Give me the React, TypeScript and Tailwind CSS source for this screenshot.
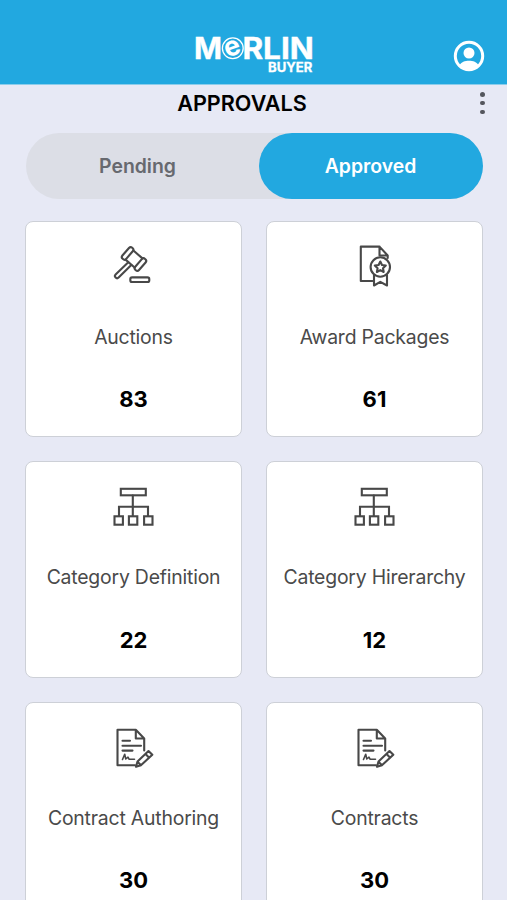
import React, { useState } from "react";

type IconProps = { className?: string };

const lineIcon = {
  viewBox: "0 0 70 60",
  width: 70,
  height: 60,
  fill: "none",
  stroke: "#484848",
  strokeWidth: 2.1,
  strokeLinejoin: "round" as const,
  strokeLinecap: "round" as const,
};

function GavelIcon({ className }: IconProps) {
  return (
    <svg {...lineIcon} className={className}>
      <g transform="translate(34 24) rotate(41)">
        <path d="M-6 -6H6M-6 6H6" />
        <rect x="-11" y="-7.3" width="5" height="14.6" rx="2.3" />
        <rect x="6" y="-7.3" width="5" height="14.6" rx="2.3" />
      </g>
      <path d="M28.3 27.3L15.6 39.6a2.1 2.1 0 0 0 3 3L31.3 30" />
      <rect x="30.3" y="42.4" width="19" height="4.6" rx="1.8" />
    </svg>
  );
}

function AwardIcon({ className }: IconProps) {
  return (
    <svg {...lineIcon} className={className}>
      <path d="M31.5 46H19.8V11.6H38.5L46.7 20.5V23M38.5 11.6V20.5H46.7" />
      <circle cx="39.3" cy="32" r="9.7" />
      <path d="M39.3 26.5l1.7 3.5 3.8.5-2.8 2.7.7 3.8-3.4-1.9-3.4 1.9.7-3.8-2.8-2.7 3.8-.5z" />
      <path d="M33 40V50.5L39.3 46.8L46 50.5V40" />
    </svg>
  );
}

function HierarchyIcon({ className }: IconProps) {
  return (
    <svg {...lineIcon} strokeLinejoin="miter" className={className}>
      <rect x="20.8" y="13.8" width="25" height="6.5" />
      <path d="M32.8 20.5V41M19 41V31.8H48V41" />
      <rect x="14.5" y="41.3" width="8.4" height="8.4" />
      <rect x="28.9" y="41.3" width="8.4" height="8.4" />
      <rect x="44.1" y="41.3" width="8.4" height="8.4" />
    </svg>
  );
}

function ContractIcon({ className }: IconProps) {
  return (
    <svg {...lineIcon} className={className}>
      <path d="M35 49.3H17.5V13.8H35.8L44.2 22.5V34.5M35.8 13.8V22.5H44.2" />
      <path d="M22.5 24.8H30M22.5 29.8H41M22.5 34.6H32.5" />
      <path d="M22.5 43.5L24.7 38.3L25.8 43L28 41.2L29 43.2H34.5" strokeWidth="1.6" />
      <path d="M36 50.8L37.5 45.6L48.5 35L52.3 38.8L40.9 49.3ZM45.5 38L49.2 41.7M37.5 45.6L40.9 49.3" />
    </svg>
  );
}

function Logo() {
  return (
    <svg width="140" height="52" viewBox="184 24 140 52" fill="#fff" stroke="#fff" fontFamily="Inter, sans-serif">
      <text x="194" y="58.8" fontSize="29.2" fontWeight="700" strokeWidth="0.4" textLength="28" lengthAdjust="spacingAndGlyphs">M</text>
      <circle cx="232.8" cy="48.3" r="10.4" fill="none" strokeWidth="1.3" />
      <text x="224.4" y="55.3" fontSize="27" fontWeight="700" strokeWidth="0" transform="rotate(-20 232.8 48.3)">e</text>
      <text x="242.4" y="58.8" fontSize="29.2" fontWeight="700" strokeWidth="0.4" textLength="71.4" lengthAdjust="spacingAndGlyphs">RLIN</text>
      <text x="268" y="71.6" fontSize="13" fontWeight="700" strokeWidth="0.3" textLength="44.2" lengthAdjust="spacingAndGlyphs">BUYER</text>
    </svg>
  );
}

function ProfileIcon() {
  return (
    <svg width="32" height="32" viewBox="0 0 32 32">
      <circle cx="16" cy="16" r="13.7" fill="none" stroke="#fff" strokeWidth="3" />
      <circle cx="16" cy="13" r="5.5" fill="#fff" />
      <path d="M6.5 25.5C8 22 12 20.7 16 20.7S24 22 25.5 25.5C20 31 12 31 6.5 25.5Z" fill="#fff" />
    </svg>
  );
}

const tabs = ["Pending", "Approved"];

const approvals = [
  { name: "Auctions", count: 83, icon: GavelIcon },
  { name: "Award Packages", count: 61, icon: AwardIcon },
  { name: "Category Definition", count: 22, icon: HierarchyIcon },
  { name: "Category Hirerarchy", count: 12, icon: HierarchyIcon },
  { name: "Contract Authoring", count: 30, icon: ContractIcon },
  { name: "Contracts", count: 30, icon: ContractIcon },
];

export default function App() {
  const [activeTab, setActiveTab] = useState("Approved");

  return (
    <div className="h-[900px] w-[507px] overflow-hidden bg-[#e7e9f5] font-['Inter',sans-serif]">
      {/* Header */}
      <header className="grid h-[85px] grid-cols-[1fr_140px_1fr] border-b border-[#8ccdeb] bg-[#22a8e0] pt-[24px]">
        <div />
        <Logo />
        <div className="flex justify-end pt-4 pr-[22px]">
          <button aria-label="Profile" className="h-8 w-8">
            <ProfileIcon />
          </button>
        </div>
      </header>

      {/* Title bar */}
      <div className="flex h-[47.5px] items-start pr-[22.5px]">
        <h1 className="flex-1 pt-1 pl-1 text-center text-[21.6px] leading-7 font-semibold text-black">APPROVALS</h1>
        <button aria-label="More options" className="flex flex-col gap-[4.2px] pt-[7px]">
          <span className="h-[4.6px] w-[4.6px] rounded-full bg-[#54565d]" />
          <span className="h-[4.6px] w-[4.6px] rounded-full bg-[#54565d]" />
          <span className="h-[4.6px] w-[4.6px] rounded-full bg-[#54565d]" />
        </button>
      </div>

      {/* Tabs */}
      <div className="mr-[24.5px] ml-[25.5px] flex h-[66.5px] justify-between rounded-full bg-[#dcdee6]">
        {tabs.map((tab) => (
          <button
            key={tab}
            onClick={() => setActiveTab(tab)}
            className={`h-full w-[224px] rounded-full pt-[2px] text-[19.4px] font-semibold ${
              activeTab === tab ? "bg-[#22a8e0] text-white" : "text-[#67696f]"
            }`}
          >
            {tab}
          </button>
        ))}
      </div>

      {/* Approval cards */}
      <div className="mr-[24px] ml-[25px] mt-[21.5px] grid grid-cols-2 gap-6">
        {approvals.map((item) => (
          <div
            key={item.name}
            className="flex h-[216.7px] flex-col items-center rounded-lg border border-[#cdd0d7] bg-white pt-[13px]"
          >
            <item.icon className="ml-[2.6px]" />
            <p className="mt-[28px] text-[19.4px] leading-7 font-[430] tracking-[-0.01em] whitespace-nowrap text-[#4a4a4a]">
              {item.name}
            </p>
            <p className="mt-[34.6px] text-[22px] leading-7 font-bold text-black">{item.count}</p>
          </div>
        ))}
      </div>
    </div>
  );
}
